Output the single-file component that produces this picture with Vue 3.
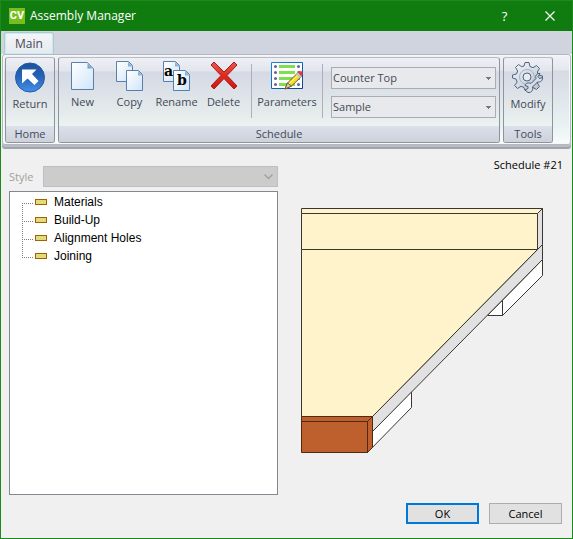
<script setup>
import { ref } from 'vue'

const items = ['Materials', 'Build-Up', 'Alignment Holes', 'Joining']
const category = ref('Counter Top')
const template = ref('Sample')
const style = ref('')
</script>

<template>
  <div class="window">
    <header class="titlebar">
      <span class="logo">CV</span>
      <h1>Assembly Manager</h1>
      <button class="caption" type="button" aria-label="Help">?</button>
      <button class="caption" type="button" aria-label="Close">
        <svg width="10" height="10" viewBox="0 0 10 10"><path d="M.5 .5l9 9M9.500 .5l-9 9" stroke="#fff" stroke-width="1.2" /></svg>
      </button>
    </header>

    <nav class="tabs"><button class="tab" type="button">Main</button></nav>

    <section class="ribbon">
      <div class="group">
        <div class="tools">
          <button class="tool" type="button">
            <svg width="32" height="32" viewBox="0 0 32 32">
              <defs><linearGradient id="blue" x1="0" y1="0" x2="0" y2="1"><stop offset="0" stop-color="#1d4f9e" /><stop offset=".5" stop-color="#2765b8" /><stop offset="1" stop-color="#4590ea" /></linearGradient></defs>
              <circle cx="16" cy="15.500" r="14.5" fill="url(#blue)" stroke="#2458a5" />
              <path d="M8 7.500h14.500l-4.500 4.500 6.500 7-4 4-7-6.500L8 21.500z" fill="#fff" />
            </svg>
            <span>Return</span>
          </button>
        </div>
        <h2>Home</h2>
      </div>

      <div class="group wide">
        <div class="tools">
          <button class="tool" type="button">
            <svg width="32" height="32" viewBox="0 0 32 32">
              <defs>
                <linearGradient id="paper" x1="0" y1="0" x2="1" y2="1"><stop offset="0" stop-color="#fff" /><stop offset="1" stop-color="#cfe5f8" /></linearGradient>
                <linearGradient id="fold" x1="0" y1="1" x2="1" y2="0"><stop offset="0" stop-color="#5f8fbd" /><stop offset="1" stop-color="#d6e8f6" /></linearGradient>
              </defs>
              <path d="M4.500 2.500h16l6 6v21h-22z" fill="url(#paper)" stroke="#5a7fa8" />
              <path d="M20.500 2.500v6h6z" fill="url(#fold)" />
            </svg>
            <span>New</span>
          </button>
          <button class="tool" type="button">
            <svg width="32" height="32" viewBox="0 0 32 32">
              <g fill="url(#paper)" stroke="#5a7fa8"><path d="M2.500 1.500h12l4 4v16h-16z" /><path d="M12.500 10.500h12l4 4v16h-16z" /></g>
              <path d="M14 1.500v5h5zM24 10.500v5h5z" fill="url(#fold)" />
            </svg>
            <span>Copy</span>
          </button>
          <button class="tool" type="button">
            <svg width="32" height="32" viewBox="0 0 32 32">
              <g fill="url(#paper)" stroke="#5a7fa8"><path d="M2.500 1.500h12l4 4v16h-16z" /><path d="M12.500 10.500h12l4 4v16h-16z" /></g>
              <path d="M14 1.500v5h5zM24 10.500v5h5z" fill="url(#fold)" />
              <text class="letter" x="3" y="16">a</text><text class="letter" x="16" y="25">b</text>
            </svg>
            <span>Rename</span>
          </button>
          <button class="tool" type="button">
            <svg width="32" height="32" viewBox="0 0 32 32">
              <defs><linearGradient id="red" x1="0" y1="0" x2="0" y2="1"><stop offset="0" stop-color="#e8584f" /><stop offset=".5" stop-color="#e02b20" /><stop offset="1" stop-color="#cf1512" /></linearGradient></defs>
              <path d="M6 2l10 10L26 2l3 3-10 10.500L29 26l-3 3-10-10.500L6 29l-3-3 10-10.500L3 5z" fill="url(#red)" stroke="#aa1a18" />
            </svg>
            <span>Delete</span>
          </button>
          <i class="rule"></i>
          <button class="tool" type="button">
            <svg width="32" height="32" viewBox="0 0 32 32">
              <defs><linearGradient id="frame" x1="0" y1="0" x2="1" y2="1"><stop offset="0" stop-color="#168bd2" /><stop offset="1" stop-color="#123e90" /></linearGradient></defs>
              <path d="M.5 2.500h31v26h-31z" fill="#fff" stroke="url(#frame)" />
              <path d="M8 6.500h16M8 12.500h16M8 18.500h16M8 24.500h16" stroke="#7ee04c" stroke-width="3" />
              <g fill="#6a5fa2"><circle v-for="n in 8" :key="n" :cx="n % 2 ? 4.5 : 27.5" :cy="Math.ceil(n / 2) * 6 + .5" r="1.5" /></g>
              <path d="M14 29l2.500-6L27 12.500l4 3.500-10.500 10z" fill="#f8dc32" stroke="#71601f" />
              <path d="M14 29l2.500-6 4 3z" fill="#e7cda0" stroke="#6b5b3d" /><path d="M18 24L28 14" stroke="#fff3a0" />
              <path d="M25 14l4 4 2-2-4-4z" fill="#b9c5d3" /><path d="M27 12.500l1.500-1.500 3 .5v3L30 16z" fill="#e4393d" />
            </svg>
            <span>Parameters</span>
          </button>
          <i class="rule"></i>
          <div class="selects">
            <select v-model="category" aria-label="Category"><option>Counter Top</option></select>
            <select v-model="template" aria-label="Template"><option>Sample</option></select>
          </div>
        </div>
        <h2>Schedule</h2>
      </div>

      <div class="group">
        <div class="tools">
          <button class="tool" type="button">
            <svg width="32" height="32" viewBox="0 0 32 32">
              <defs><linearGradient id="steel" x1="0" y1="0" x2="1" y2="1"><stop offset="0" stop-color="#f3f6fa" /><stop offset="1" stop-color="#b4bfce" /></linearGradient></defs>
              <path d="M13 .5h4l1 4 3 1.200 3.500-2.200 3 3-2.200 3.500 1.200 3 4 1v3l-4 1-1.200 3 2.200 3.500-3 3-3.500-2-3 1.200-1 1.800h-4l-1-3-3-1.200-3.500 2.200-3-3L5.200 20l-1.200-3-3.500-1v-3l4-1 1.200-3L3.500 5.500l3-3 3 2.200 2.500-.7z" fill="url(#steel)" stroke="#53657e" />
              <circle cx="15" cy="15" r="7.500" fill="none" stroke="#a8b3c2" /><circle cx="15" cy="15" r="4" fill="#e7ebf2" stroke="#53657e" />
              <path d="M13 28l3-1.500v-2l-3-1c1-3 4-3 6-2l5-5c-1-3 1-5.500 4-5l-2 3 1.500 2 3-1c.5 3-2 5-5 4.500l-5 5c1 3-1 6-4.500 5.500z" fill="#d6dde7" stroke="#4b5e77" />
            </svg>
            <span>Modify</span>
          </button>
        </div>
        <h2>Tools</h2>
      </div>
    </section>

    <main class="content">
      <div class="left">
        <div class="style-row">
          <label for="style">Style</label>
          <div class="style-box">
            <select id="style" v-model="style" disabled><option value=""></option></select>
            <svg width="9" height="6" viewBox="0 0 9 6"><path d="M.5 .5l4 4 4-4" fill="none" stroke="#a0a0a0" stroke-width="1.300" /></svg>
          </div>
        </div>
        <ul class="tree">
          <li v-for="item in items" :key="item"><span class="branch"></span><span class="node"></span>{{ item }}</li>
        </ul>
      </div>
      <div class="right">
        <p>Schedule #21</p>
        <svg class="drawing" viewBox="301 207 243 247" role="img" aria-label="Counter top">
          <g stroke="#3a3733" stroke-width="1" stroke-linejoin="round">
            <path d="M542.500 259.500V275.500L502.500 315.500H487.500z" fill="#fff" />
            <path d="M502.500 315.500V300" />
            <path d="M411.500 391.500V407.500L367.500 452.500L372.500 431z" fill="#fff" />
            <path d="M542.500 244.500V259.500L372.500 431.500V416.500z" fill="#e1e1e1" />
            <path d="M537.500 213.500L542.500 208.500V244.500L537.500 249.500z" fill="#e1e1e1" />
            <path d="M301.500 249.500H537.500L372.500 416.500H301.500z" fill="#fff3cc" />
            <path d="M301.500 213.500H537.500V249.500H301.500z" fill="#fff3cc" />
            <path d="M301.500 208.500H542.500L537.500 213.500H301.500z" fill="#fff3cc" />
            <g fill="#bd602e" stroke="#52290f"><path d="M301.500 416.500H372.500L367.500 421.500H301.500z" /><path d="M372.500 416.500V447.500L367.500 452.500V421.500z" /><path d="M301.500 421.500H367.500V452.500H301.500z" /></g>
          </g>
        </svg>
        <footer><button class="ok" type="button">OK</button><button type="button">Cancel</button></footer>
      </div>
    </main>
  </div>
</template>

<style>
body { margin: 0; }
</style>

<style scoped>
* { box-sizing: border-box; }
h1, h2, p, ul { margin: 0; padding: 0; font-weight: 400; }
button, select { font: inherit; color: inherit; border-radius: 0; }
svg { display: block; flex: none; }
.window { min-height: 100vh; display: flex; flex-direction: column; border: 1px solid #1b891b; background: #f0f0f0; font: 11px/14px "Open Sans", sans-serif; color: #000; }
.titlebar { height: 30px; display: flex; align-items: center; padding-left: 8px; background: #107c10; color: #fff; }
.logo { width: 16px; height: 16px; background: #78be20; font: 700 11px/16px Roboto, sans-serif; text-align: center; }
h1 { flex: 1; padding-left: 5px; font-size: 12px; line-height: 16px; }
.caption { width: 45px; height: 30px; padding: 0; border: 0; background: none; display: grid; place-items: center; font-size: 13px; }
.tabs { height: 23px; padding: 1px 3px 0; background: #d0d4de; }
.tab { width: 50px; height: 22px; padding: 0; border: 1px solid #b9c4cd; border-bottom: 0; border-radius: 3px 3px 0 0; background: linear-gradient(#f4f6f8, #e6e9ef); box-shadow: inset 0 0 1px 1px #c1eff5; color: #434a55; font-size: 12px; }
.ribbon { display: flex; gap: 3px; margin: 0 1px; padding: 2px 17px 1px 2px; border: 1px solid #b4b8be; border-radius: 3px; background: linear-gradient(#f1f3f7, #e4e7ed 15px, #d6dae4 16px, #e8f2f2 70px, #f8fcfc); box-shadow: inset 0 0 0 1px #f7f8fa, 0 2px #b9bcc3, 0 4px #9fa4ad; }
.group { width: 50px; height: 86px; display: flex; flex-direction: column; border: 1px solid #8f949b; border-top-color: #b8bcc4; border-radius: 3px; overflow: hidden; background: linear-gradient(#eef0f5, #e2e5ed 13px, #d5d9e4 14px, #e5ebec 55px, #edf2f2 68px); color: #434a55; }
.wide { flex: 1; }
.tools { flex: 1; display: flex; }
h2 { height: 16px; background: linear-gradient(#dce0ea, #ccd1dc); font-size: 11px; line-height: 15px; text-align: center; }
.tool { width: 47px; display: flex; flex-direction: column; align-items: center; gap: 2px; padding: 2px 0 0; border: 0; background: none; line-height: 16px; }
.group:not(.wide) .tool { width: 48px; padding-top: 4px; }
.rule { width: 1px; height: 54px; margin: 6px 4px 0; background: #adb0b5; }
.rule + .tool { width: 62px; }
.selects { flex: 1; display: flex; flex-direction: column; gap: 7px; padding: 9px 3px 0 4px; }
.selects select { width: 100%; height: 22px; padding: 0 1px; border: 1px solid #a9adb3; appearance: none; background: conic-gradient(from 315deg at 50% 100%, #747980 90deg, transparent 0) right 4px center / 5px 3px no-repeat, #e7e9ec; }
.content { flex: 1; display: grid; grid-template-columns: 269fr 285fr; padding: 13px 9px 14px 8px; }
.left { display: flex; flex-direction: column; gap: 4px; padding: 8px 0 29px; }
.style-row { display: flex; align-items: center; height: 21px; color: #a0a0a0; }
.style-row label { width: 34px; }
.style-box { flex: 1; display: grid; align-items: center; }
.style-box select { grid-area: 1 / 1; width: 100%; height: 21px; border: 1px solid #bfbfbf; background: #ccc; appearance: none; opacity: 1; }
.style-box svg { grid-area: 1 / 1; justify-self: end; margin-right: 5px; pointer-events: none; }
.tree { flex: 1; padding: 1px 12px; border: 1px solid #828790; background: #fff; list-style: none; font: 12px/18px "Liberation Sans", sans-serif; }
.tree li { display: flex; align-items: center; height: 18px; }
.branch { width: 12px; height: 18px; background: repeating-linear-gradient(90deg, #808080 0 1px, transparent 1px 2px) 0 10px / 100% 1px no-repeat, repeating-linear-gradient(#808080 0 1px, transparent 1px 2px) 0 0 / 1px 100% no-repeat; }
.tree li:last-child .branch { background-size: 100% 1px, 1px 11px; }
.tree li:first-child .branch { background-position: 0 10px, 0 10px; }
.node { width: 12px; height: 6px; margin: 0 7px 0 1px; border: 1px solid #a36000; background: #dfdc7c; }
.right { display: flex; flex-direction: column; }
.right p { text-align: right; }
.drawing { width: calc(100% - 42px); margin: 35px 0 0 23px; }
footer { display: flex; justify-content: flex-end; gap: 10px; margin-top: auto; padding-right: 1px; }
footer button { width: 73px; height: 21px; padding: 0; border: 1px solid #adadad; background: #e1e1e1; }
footer .ok { border: 2px solid #0078d7; }
.letter { font: 700 14px "DejaVu Serif", serif; fill: #000; }
</style>
